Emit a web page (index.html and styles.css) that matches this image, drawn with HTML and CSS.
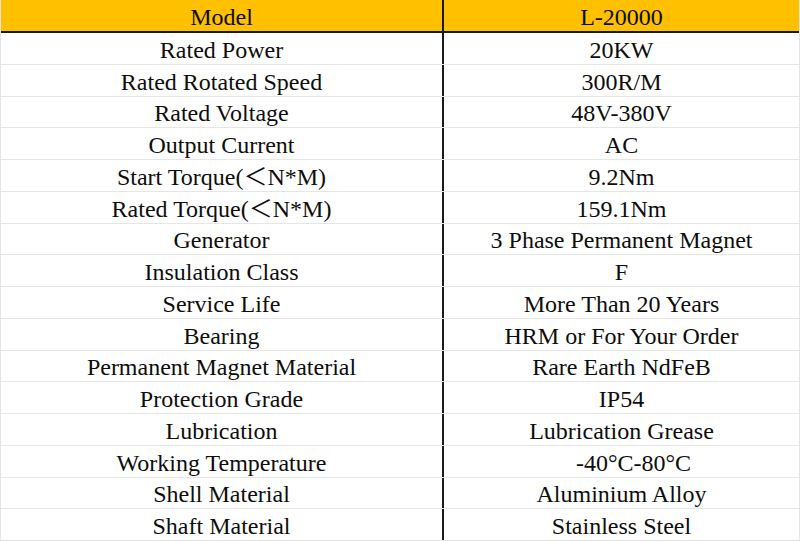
FILE: index.html
```html
<!DOCTYPE html>
<html>
<head>
<meta charset="utf-8">
<link rel="stylesheet" href="styles.css">
</head>
<body>
<div class="sheet">
  <div class="row head"><div class="cell left">Model</div><div class="cell right">L-20000</div></div>
  <div class="row"><div class="cell left">Rated Power</div><div class="cell right">20KW</div></div>
  <div class="row"><div class="cell left">Rated Rotated Speed</div><div class="cell right">300R/M</div></div>
  <div class="row"><div class="cell left">Rated Voltage</div><div class="cell right">48V-380V</div></div>
  <div class="row"><div class="cell left">Output Current</div><div class="cell right">AC</div></div>
  <div class="row"><div class="cell left">Start Torque(＜N*M)</div><div class="cell right">9.2Nm</div></div>
  <div class="row"><div class="cell left">Rated Torque(＜N*M)</div><div class="cell right">159.1Nm</div></div>
  <div class="row"><div class="cell left">Generator</div><div class="cell right">3 Phase Permanent Magnet</div></div>
  <div class="row"><div class="cell left">Insulation Class</div><div class="cell right">F</div></div>
  <div class="row"><div class="cell left">Service Life</div><div class="cell right">More Than 20 Years</div></div>
  <div class="row"><div class="cell left">Bearing</div><div class="cell right">HRM or For Your Order</div></div>
  <div class="row"><div class="cell left">Permanent Magnet Material</div><div class="cell right">Rare Earth NdFeB</div></div>
  <div class="row"><div class="cell left">Protection Grade</div><div class="cell right">IP54</div></div>
  <div class="row"><div class="cell left">Lubrication</div><div class="cell right">Lubrication Grease</div></div>
  <div class="row"><div class="cell left">Working Temperature</div><div class="cell right">    -40°C-80°C</div></div>
  <div class="row"><div class="cell left">Shell Material</div><div class="cell right">Aluminium Alloy</div></div>
  <div class="row"><div class="cell left">Shaft Material</div><div class="cell right">Stainless Steel</div></div>
</div>
</body>
</html>
```

FILE: styles.css
```css
html, body {
  margin: 0;
  padding: 0;
  background: #ffffff;
}
.sheet {
  width: 800px;
  height: 541px;
  overflow: hidden;
  font-family: "Liberation Serif", "Noto Sans CJK SC", serif;
  font-size: 24px;
  line-height: 1;
  color: #0d0d0d;
  box-sizing: border-box;
  border-left: 1px solid #e4e4e4;
  border-right: 1px solid #e4e4e4;
  display: flex;
  flex-direction: column;
}
.row {
  display: flex;
  height: 31.75px;
  box-sizing: border-box;
  border-bottom: 1px solid #e6e6e6;
  flex: none;
}
.row.head {
  height: 33px;
  background: #ffc000;
  border-bottom: 2px solid #1a1a1a;
}
.cell {
  display: flex;
  align-items: center;
  justify-content: center;
  white-space: pre;
  padding-top: 3px;
  box-sizing: border-box;
}
.left {
  width: 443px;
  border-right: 2px solid #1a1a1a;
  flex: none;
}
.right {
  flex: 1;
}
```
